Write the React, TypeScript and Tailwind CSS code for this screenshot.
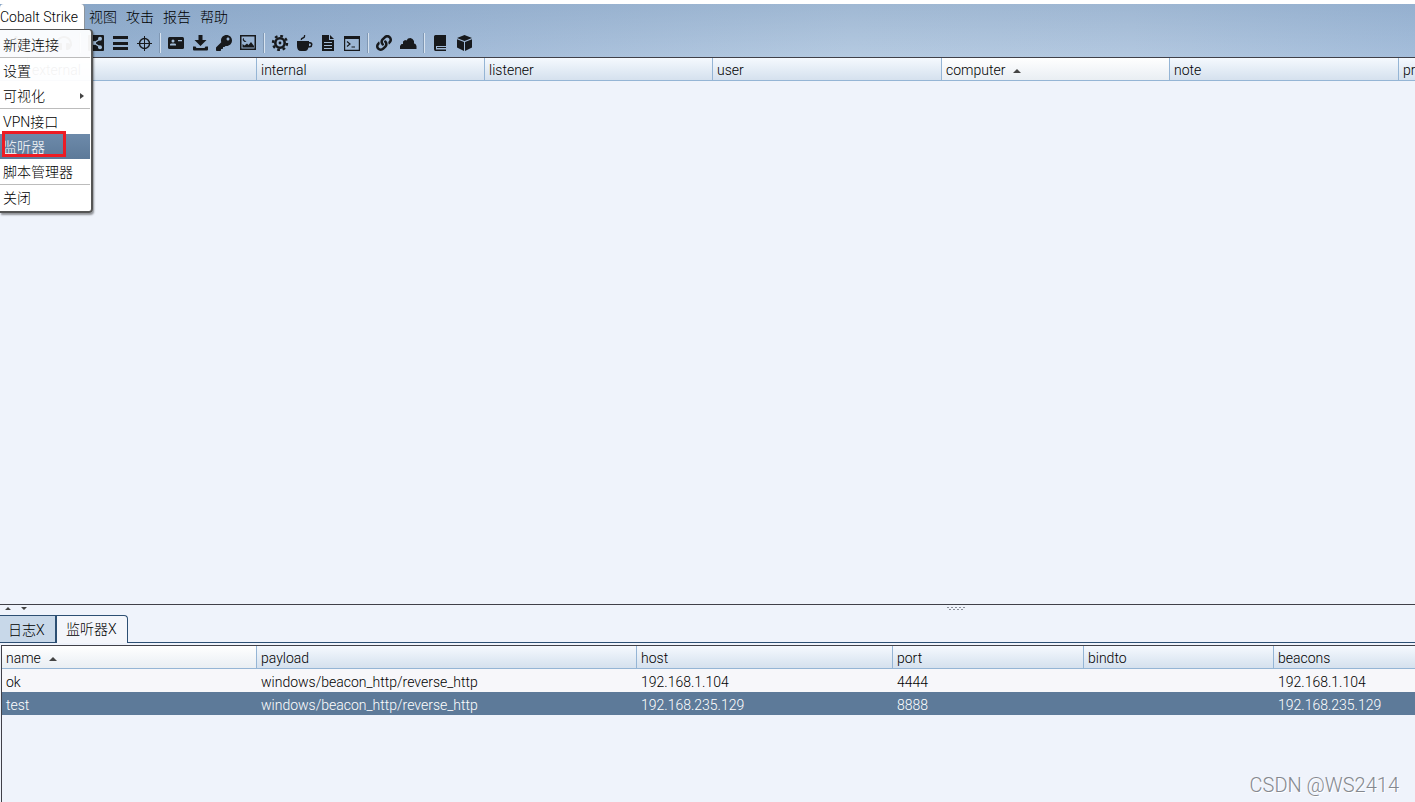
import React from 'react';
import { FaKey, FaLink, FaHeadphones, FaPlus, FaMinus } from 'react-icons/fa';

const menus = ['视图', '攻击', '报告', '帮助'];

const menuItems = [
  { label: '新建连接', divider: true },
  { label: '设置' },
  { label: '可视化', submenu: true, divider: true },
  { label: 'VPN接口' },
  { label: '监听器', selected: true },
  { label: '脚本管理器', divider: true },
  { label: '关闭' },
];

const sessionColumns = [
  { label: '', width: 'w-7' },
  { label: 'external', width: 'w-[229px]' },
  { label: 'internal', width: 'w-[228px]' },
  { label: 'listener', width: 'w-[228px]' },
  { label: 'user', width: 'w-[229px]' },
  { label: 'computer', width: 'w-[228px]', sorted: true },
  { label: 'note', width: 'w-[229px]' },
  { label: 'process', width: 'w-[228px]' },
];

const listenerColumns = [
  { label: 'name', width: 'w-[255px]', sorted: true },
  { label: 'payload', width: 'w-[380px]' },
  { label: 'host', width: 'w-[256px]' },
  { label: 'port', width: 'w-[191px]' },
  { label: 'bindto', width: 'w-[190px]' },
  { label: 'beacons', width: 'w-[190px]' },
];

const listeners = [
  ['ok', 'windows/beacon_http/reverse_http', '192.168.1.104', '4444', '', '192.168.1.104'],
  ['test', 'windows/beacon_http/reverse_http', '192.168.235.129', '8888', '', '192.168.235.129'],
];

function Glyph({ children }: { children: React.ReactNode }) {
  return (
    <svg viewBox="0 0 18 16" className="h-4 w-[18px]" fill="currentColor">
      {children}
    </svg>
  );
}

const toolGroups = [
  [
    { name: 'Connect', icon: <FaPlus /> },
    { name: 'Disconnect', icon: <FaMinus /> },
    { name: 'Listeners', icon: <FaHeadphones /> },
  ],
  [
    {
      name: 'Graph view',
      icon: (
        <Glyph>
          <rect x="1" width="16" height="16" rx="1" />
          <path d="M13 4 7 8l6 4" fill="none" stroke="#9fbad6" strokeWidth="1.3" />
          <circle cx="13" cy="3.800" r="2" fill="#9fbad6" />
          <circle cx="7" cy="8" r="2" fill="#9fbad6" />
          <circle cx="13" cy="12.200" r="2" fill="#9fbad6" />
        </Glyph>
      ),
    },
    { name: 'Table view', icon: <Glyph><path d="M2 1h15v3H2zM2 7h15v3H2zM2 12h15v3H2z" /></Glyph> },
    {
      name: 'Target view',
      icon: (
        <Glyph>
          <circle cx="9.500" cy="8.500" r="5" fill="none" stroke="currentColor" strokeWidth="1.4" />
          <path d="M9.500 1v15M2 8.500h15" fill="none" stroke="currentColor" strokeWidth="1" />
        </Glyph>
      ),
    },
  ],
  [
    {
      name: 'Credentials',
      icon: (
        <Glyph>
          <rect x="1" y="2" width="16" height="12" rx="1.500" />
          <circle cx="6" cy="6" r="1.500" fill="#a4bdd8" />
          <path d="M3 10.500V9.500Q3 8.500 4.500 8.500h3Q9 8.500 9 9.500v1zM11 5h4v1.200h-4z" fill="#a4bdd8" />
        </Glyph>
      ),
    },
    {
      name: 'Downloads',
      icon: <Glyph><path d="M7.500 0h4v5h4l-6 6-6-6h4zM2 11.500l2.500 0 1 1.500h8l1-1.500H17v3q0 1-1 1H3q-1 0-1-1z" /></Glyph>,
    },
    { name: 'Keystrokes', icon: <FaKey /> },
    {
      name: 'Screenshots',
      icon: (
        <Glyph>
          <path fillRule="evenodd" d="M1 0h16v15H1zM2.500 1.500v12h13v-12z" />
          <path d="M3.500 12.500V9l2 1.500L8 8.500l1.500 1.500L12 7l3 4v1.500z" />
          <path d="M5 3a2 2 0 1 0 2.500 3A2.200 2.200 0 0 1 5 3z" />
        </Glyph>
      ),
    },
  ],
  [
    {
      name: 'Payload',
      icon: (
        <Glyph>
          <circle cx="9" cy="8" r="7" fill="none" stroke="currentColor" strokeWidth="2.400" strokeDasharray="2.750 2.750" />
          <circle cx="9" cy="8" r="4.700" fill="none" stroke="currentColor" strokeWidth="2.600" />
          <circle cx="9" cy="8" r="1.400" />
        </Glyph>
      ),
    },
    {
      name: 'Java attack',
      icon: (
        <Glyph>
          <path fillRule="evenodd" d="M2 6h12v1h1q2.500 0 2.500 2.500T15 12.500h-1.500Q12.500 16 10 16H6q-4 0-4-5zM14 8.500v2.700q2 0 2-1.400T14 8.500z" />
          <path d="M6.500 5Q6 3.500 8 3t1.500-3" fill="none" stroke="currentColor" strokeWidth="1.300" />
        </Glyph>
      ),
    },
    {
      name: 'Document',
      icon: (
        <Glyph>
          <path d="M3 0h7v5h5v11H3zM11 0l4 4h-4z" />
          <path d="M5 7.500h8M5 10.500h8M5 13.500h8" stroke="#a4bdd8" strokeWidth="1" />
        </Glyph>
      ),
    },
    {
      name: 'Script console',
      icon: (
        <Glyph>
          <path fillRule="evenodd" d="M1 1h16v15H1zM2.200 4v10.800h13.600V4z" />
          <path d="m4 6.500 3 2.500-3 2.500M8.500 12H12" fill="none" stroke="currentColor" strokeWidth="1.200" />
        </Glyph>
      ),
    },
  ],
  [
    { name: 'Link', icon: <FaLink /> },
    {
      name: 'Host file',
      icon: <Glyph><path d="M1 14v-3l1.500-2H4V6.500L6 5l1.500.5L9 3.500 11.500 3l2 1L15 6v2.500l1.500.5 1 2v3z" /></Glyph>,
    },
  ],
  [
    {
      name: 'Manual',
      icon: (
        <Glyph>
          <path d="M4.500 0H15v11H5v3.500h10V16H4.500Q3 16 3 14V1.500Q3 0 4.500 0z" />
          <path d="M6 12.500h9" stroke="currentColor" strokeWidth="1" />
        </Glyph>
      ),
    },
    {
      name: 'About',
      icon: (
        <Glyph>
          <path d="M9.500 0 17 3 9.500 6 2 3zM2 4.200 9 7v9l-7-3.500zM17 4.200 10 7v9l7-3.500z" />
        </Glyph>
      ),
    },
  ],
];

function SortArrow() {
  return (
    <svg viewBox="0 0 8 4" className="ml-2 inline-block h-1 w-2 align-middle" fill="#444">
      <path d="M4 0 8 4H0z" />
    </svg>
  );
}

type Column = { label: string; width: string; sorted?: boolean };

function HeaderRow({ columns }: { columns: Column[] }) {
  return (
    <thead>
      <tr className="h-[23px]">
        {columns.map((col) => (
          <th
            key={col.label}
            className={`${col.width} border-r border-b border-[#95b5d5] bg-linear-to-b p-0 pt-0.5 pl-1 text-left font-light ${
              col.sorted ? 'from-white to-[#e9eef3]' : 'from-[#f5f9fe] to-[#d5e1ee]'
            }`}
          >
            {col.label}
            {col.sorted && <SortArrow />}
          </th>
        ))}
      </tr>
    </thead>
  );
}

function FileMenu() {
  return (
    <div
      role="menu"
      className="absolute top-[25px] left-0 w-[93px] rounded-r-sm border-t border-r-2 border-b-2 border-[#555] bg-white/95 pt-0.5 pb-px shadow-[1px_2px_2px_rgba(0,0,0,0.4)]"
    >
      {menuItems.map((item) => (
        <div key={item.label} className="pr-px">
          <button
            role="menuitem"
            className={`flex h-[25px] w-full items-center justify-between pr-1.5 pl-[3px] whitespace-nowrap ${
              item.selected ? 'bg-linear-to-b from-[#6d8aaa] to-[#5d7a99] text-white' : ''
            }`}
          >
            {item.label}
            {item.submenu && (
              <svg viewBox="0 0 4 6" className="h-1.5 w-1" fill="#444">
                <path d="M0 0 4 3 0 6z" />
              </svg>
            )}
          </button>
          {item.divider && <hr className="border-[#bcbcbc]" />}
        </div>
      ))}
      {/* Highlight around the listeners entry */}
      <div className="absolute top-[101px] left-[2px] h-[26px] w-16 border-[3px] border-[#ed1c24]" />
    </div>
  );
}

export default function App() {
  return (
    <div className="flex h-screen flex-col overflow-hidden border-t-4 border-white bg-[#eff3fb] font-['Roboto','Noto_Sans_CJK_SC',sans-serif] text-sm font-light text-black">
      <header className="relative z-10 border-b border-[#404048] bg-[linear-gradient(to_bottom,rgba(110,142,178,0.3),transparent),linear-gradient(to_right,#94b0cf_0%,#a0b9d7_25%,#b5cae1_60%,#b3c8e0_80%,#a5bedb_100%)]">
        <nav className="flex h-[25px] items-center">
          <button className="h-full w-[85px] rounded-t-sm border-r border-[#8c949c] bg-white text-left whitespace-nowrap">
            Cobalt Strike
          </button>
          {menus.map((label) => (
            <button key={label} className="w-[37px] pl-1 text-left whitespace-nowrap">
              {label}
            </button>
          ))}
        </nav>
        <div className="flex h-7 items-center pl-1 text-[#17191c]">
          {toolGroups.map((group, i) => (
            <React.Fragment key={i}>
              {i > 0 && <span className="mx-[3px] h-5 w-0.5 border-r border-l border-r-[#d8e3ef] border-l-[#8098b4]" />}
              {group.map((tool) => (
                <button key={tool.name} aria-label={tool.name} className="flex h-6 w-6 items-center justify-center text-base">
                  {tool.icon}
                </button>
              ))}
            </React.Fragment>
          ))}
        </div>
        <FileMenu />
      </header>

      <main className="min-h-0 flex-1 overflow-hidden">
        <table className="w-max table-fixed border-separate border-spacing-0">
          <HeaderRow columns={sessionColumns} />
        </table>
      </main>

      {/* Split pane divider */}
      <div className="flex h-[11px] items-start border-t border-[#404048]">
        <svg viewBox="0 0 40 8" className="h-2 w-10" fill="#444">
          <path d="M5 5 8 2l3 3zM21 2l3 3 3-3z" />
        </svg>
        <div className="flex flex-1 justify-center pl-[456px]">
          <svg viewBox="0 0 18 5" className="mt-0.5 h-[5px] w-[18px]" fill="#8a8e98">
            <path d="M0 0h2v1H0zM4 0h2v1H4zM8 0h2v1H8zM12 0h2v1h-2zM16 0h2v1h-2zM2 2h2v1H2zM6 2h2v1H6zM10 2h2v1h-2zM14 2h2v1h-2z" />
          </svg>
        </div>
      </div>

      <section className="flex h-[187px] flex-col">
        <div role="tablist" className="flex h-7 border-b border-[#2d4f73]">
          <button role="tab" className="w-[57px] border-t border-r-2 border-[#2d4f73] bg-[#c8d8e9] pt-0.5 pl-2 text-left whitespace-nowrap">
            日志X
          </button>
          <button role="tab" aria-selected="true" className="-mb-px w-[71px] rounded-tr-sm border-t border-r border-[#2d4f73] bg-[#f4f6fb] pb-0.5 pl-[9px] text-left whitespace-nowrap">
            监听器X
          </button>
        </div>
        <div className="mt-0.5 ml-px flex-1 overflow-hidden border-t border-l border-[#404048]">
          <table className="w-full table-fixed border-separate border-spacing-0">
            <HeaderRow columns={listenerColumns} />
            <tbody>
              {listeners.map((row) => (
                <tr key={row[0]} className={`h-[23px] ${row[0] === 'test' ? 'bg-[#5d7a99] text-white' : 'bg-[#f7f7fa]'}`}>
                  {row.map((value, i) => (
                    <td key={i} className="truncate p-0 pt-0.5 pl-1">{value}</td>
                  ))}
                </tr>
              ))}
            </tbody>
          </table>
        </div>
      </section>

      <div className="absolute right-4 bottom-[3px] font-['Roboto',sans-serif] text-xl text-[#85888e] [text-shadow:1px_1px_white]">
        CSDN @WS2414
      </div>
    </div>
  );
}
